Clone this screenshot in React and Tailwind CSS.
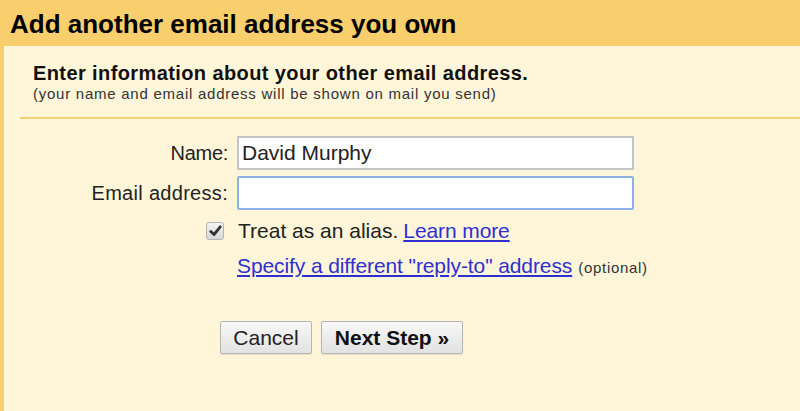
export default function App() {
  return (
    <div className="w-[800px] h-[411px] bg-[#f9cf6e] flex flex-col overflow-hidden" style={{ fontFamily: '"Liberation Sans", Arial, sans-serif' }}>
      <div className="h-[46px] shrink-0 pl-[10px] pt-[9px]">
        <h1 className="text-[26px] leading-[30px] font-bold text-black">Add another email address you own</h1>
      </div>
      <div className="flex-1 ml-[4px] bg-[#fff6da]">
        <div className="pl-[29px] pt-[15px] pb-[14px]">
          <h2 className="text-[20px] leading-[24px] font-bold tracking-[0.4px] text-[#111]">Enter information about your other email address.</h2>
          <p className="text-[15px] leading-[18px] tracking-[0.75px] text-[#333]">(your name and email address will be shown on mail you send)</p>
        </div>
        <div className="ml-[16px] h-[2px] bg-[#fad070]" />
        <div className="pt-[17px] flex flex-col gap-[6px]">
          <div className="flex items-center">
            <label className="w-[225px] text-right text-[20px] leading-[24px] tracking-[-0.3px] text-[#222] pr-[1px]">Name:</label>
            <input
              defaultValue="David Murphy"
              className="ml-[8px] w-[397px] h-[34px] bg-white border-2 border-[#c4c4c4] px-[3px] text-[21px] text-[#222] outline-none"
              style={{ fontFamily: '"Liberation Sans", Arial, sans-serif' }}
            />
          </div>
          <div className="flex items-center">
            <label className="w-[225px] text-right text-[20px] leading-[24px] tracking-[0.3px] text-[#222] pr-[1px]">Email address:</label>
            <input
              className="ml-[8px] w-[397px] h-[34px] bg-white border-2 border-[#8fb2e6] rounded-[2px] px-[3px] text-[21px] outline-none"
            />
          </div>
        </div>
        <div className="pl-[202px] pt-[9px] flex items-center h-[33px]">
          <span className="w-[18px] h-[18px] rounded-[3px] border border-[#b4b4b4] bg-gradient-to-b from-[#f4f4f4] to-[#d8d8d8] flex items-center justify-center">
            <svg width="13" height="12" viewBox="0 0 13 12">
              <path d="M1.8 6.5 L5 9.6 L11.2 1.8" fill="none" stroke="#333" strokeWidth="2.8" strokeLinecap="round" strokeLinejoin="round" />
            </svg>
          </span>
          <span className="ml-[14px] text-[21px] leading-[24px] text-[#222]">Treat as an alias.</span>
          <a href="#" className="ml-[5px] text-[21px] leading-[24px] tracking-[-0.1px] text-[#2f2fd0] underline">Learn more</a>
        </div>
        <div className="pl-[233px] pt-[11px] flex items-baseline">
          <a href="#" className="text-[21px] leading-[24px] tracking-[-0.1px] text-[#2f2fd0] underline">Specify a different "reply-to" address</a>
          <span className="ml-[6px] text-[15px] leading-[18px] tracking-[0.7px] text-[#333]">(optional)</span>
        </div>
        <div className="pl-[216px] pt-[43px] flex gap-[9px]">
          <button className="w-[92px] h-[33px] rounded-[2px] border border-[#b5b5b5] bg-gradient-to-b from-[#f8f8f8] to-[#e2e2e2] text-[21px] leading-[24px] text-[#222] shadow-[0_1px_1px_rgba(0,0,0,0.1)]">Cancel</button>
          <button className="w-[142px] h-[33px] rounded-[2px] border border-[#b5b5b5] bg-gradient-to-b from-[#f8f8f8] to-[#e2e2e2] text-[21px] leading-[24px] font-bold text-[#111] shadow-[0_1px_1px_rgba(0,0,0,0.1)]">Next Step »</button>
        </div>
      </div>
    </div>
  );
}
